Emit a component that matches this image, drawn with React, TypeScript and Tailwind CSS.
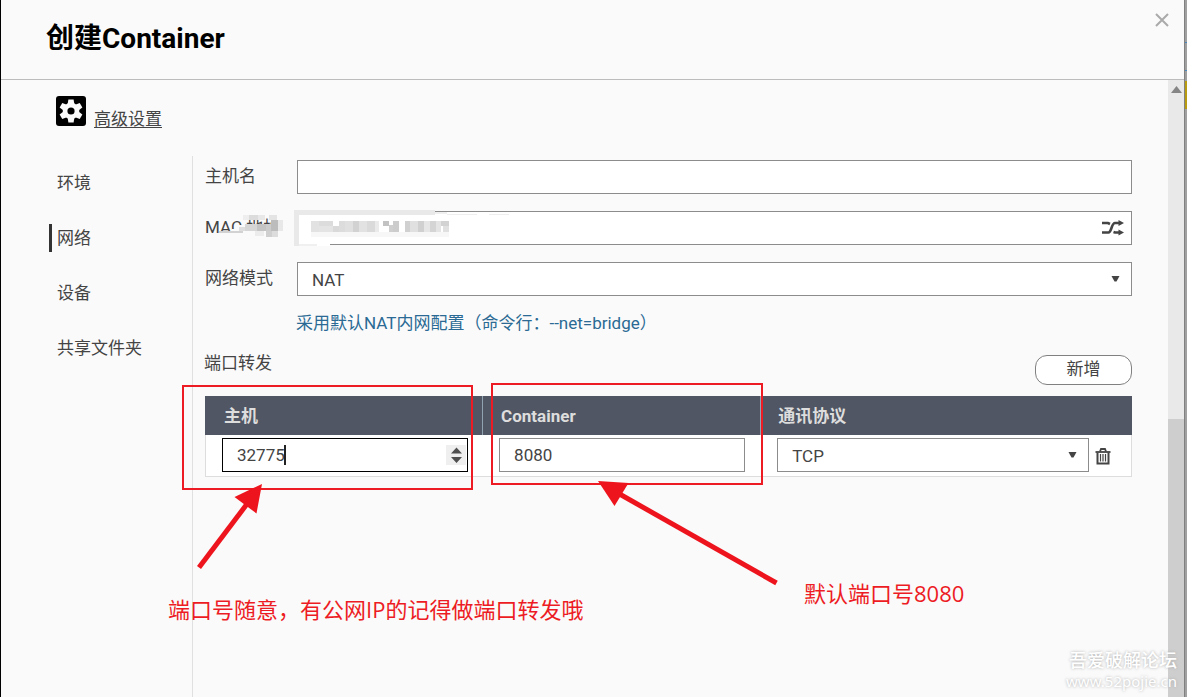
import { useState } from "react";

const navItems = ["环境", "网络", "设备", "共享文件夹"];

// Pixelated cells that hide the MAC address: x, y, width, height, colour
const macCells: [number, number, number, number, string][] = [
  [14, 10, 8, 11, "#e2e2e2"],
  [22, 10, 14, 5, "#dcdcdc"],
  [22, 15, 14, 6, "#e4e4e4"],
  [36, 15, 10, 6, "#d9d9d9"],
  [42, 10, 6, 11, "#dcdcdc"],
  [48, 10, 12, 11, "#e0e0e0"],
  [56, 10, 6, 11, "#d2d2d2"],
  [62, 10, 8, 11, "#e2e2e2"],
  [70, 10, 8, 11, "#dadada"],
  [78, 10, 4, 11, "#eaeaea"],
  [86, 10, 6, 5, "#c2c2c2"],
  [92, 14, 10, 7, "#cfcfcf"],
  [96, 10, 6, 11, "#cccccc"],
  [108, 10, 5, 11, "#d0d0d0"],
  [113, 10, 8, 11, "#e0e0e0"],
  [121, 10, 6, 11, "#d0d0d0"],
  [127, 10, 6, 11, "#e6e6e6"],
  [133, 10, 6, 11, "#d4d4d4"],
  [139, 10, 5, 11, "#e4e4e4"],
  [144, 10, 8, 5, "#d2d2d2"],
  [146, 15, 6, 6, "#e0e0e0"],
  [14, 21, 138, 5, "#f7f7f7"],
];

const labelCells: [number, number, number, number, string][] = [
  [27, 14, 14, 13, "#fafafa"],
  [14, 16, 26, 2, "#d2d2d2"],
  [38, 0, 10, 5, "#eeeeee"],
  [44, 0, 9, 5, "#dcdcdc"],
  [53, 0, 7, 5, "#e8e8e8"],
  [64, 0, 8, 5, "#e4e4e4"],
  [38, 9, 38, 18, "#fafafa"],
  [34, 12, 8, 4, "#dedede"],
  [40, 9, 12, 7, "#d6d6d6"],
  [52, 9, 9, 7, "#c4c4c4"],
  [61, 9, 5, 7, "#cccccc"],
  [66, 5, 7, 11, "#bcbcbc"],
  [73, 5, 5, 11, "#e8e8e8"],
  [50, 16, 9, 5, "#ececec"],
  [61, 16, 6, 6, "#cfcfcf"],
  [67, 16, 6, 6, "#dcdcdc"],
];

function Cells({ cells }: { cells: [number, number, number, number, string][] }) {
  return (
    <>
      {cells.map(([x, y, w, h, fill], i) => (
        <rect key={i} x={x} y={y} width={w} height={h} fill={fill} />
      ))}
    </>
  );
}

function Caret() {
  return (
    <svg
      className="pointer-events-none absolute top-3.5 right-3 h-[6px] w-[9px] fill-[#444]"
      viewBox="0 0 9 6"
      aria-hidden="true"
    >
      <path d="M0.500 0H8.500L5.500 5.500H3.500Z" />
    </svg>
  );
}

const field =
  "block h-[34px] w-full appearance-none rounded-none border border-[#8c8c8c] bg-white px-3.5 text-[17px] text-[#444] outline-none";
const selectField =
  "block h-[34px] w-full appearance-none rounded-none border border-[#8c8c8c] bg-white px-3.5 pt-0.5 text-[17px] text-[#444] outline-none";

function Annotations() {
  return (
    <div className="pointer-events-none absolute top-0 left-0 h-full w-full font-['Open_Sans','Noto_Sans_CJK_SC',sans-serif] text-[22px] leading-8 text-[#ed1c24]">
      <div className="absolute top-[385px] left-[182px] h-[105px] w-[291px] border-2 border-[#ed1c24]" />
      <div className="absolute top-[383px] left-[491px] h-[102px] w-[272px] border-2 border-[#ed1c24]" />
      <svg className="absolute top-0 left-0 h-[640px] w-[800px]" viewBox="0 0 800 640" aria-hidden="true">
        <path d="M199 567.500L250 500" stroke="#ed141d" strokeWidth="5" />
        <path d="M262 484L234.500 497L256.500 513.500Z" fill="#ed141d" />
        <path d="M776.500 583L616 492" stroke="#ed141d" strokeWidth="5" />
        <path d="M598 481L628.500 483L614.500 506Z" fill="#ed141d" />
      </svg>
      <p className="absolute top-[593px] left-[168px] whitespace-nowrap">
        端口号随意，有公网IP的记得做端口转发哦
      </p>
      <p className="absolute top-[577px] left-[804px] whitespace-nowrap">默认端口号8080</p>
    </div>
  );
}

export default function App() {
  const [hostPort, setHostPort] = useState("32775");
  const [active, setActive] = useState("网络");

  return (
    <div className="relative flex min-h-screen overflow-hidden bg-[#a0a0a0] font-[Roboto,'Noto_Sans_CJK_SC',sans-serif] text-[17px] leading-6 text-[#444]">
      <div className="flex min-w-0 flex-1 flex-col border-l border-black bg-[#fafafa]">
        <header className="flex h-20 items-start justify-between border-b border-[#bcbcbc] pr-[14px] pl-[45px]">
          <h1 className="pt-[23px] text-[28px] leading-8 font-bold text-black">创建Container</h1>
          <button type="button" aria-label="关闭" className="mt-3 p-px">
            <svg className="size-[14px]" viewBox="0 0 14 14" fill="none" stroke="#aaa" strokeWidth="2" aria-hidden="true">
              <path d="M1 1L13 13M13 1L1 13" />
            </svg>
          </button>
        </header>

        <div className="flex flex-1">
          <div className="flex min-w-0 flex-1 flex-col pt-4">
            <div className="flex items-start gap-2 pl-[55px]">
              <svg className="size-[30px]" viewBox="0 0 30 30" aria-hidden="true">
                <rect width="30" height="30" rx="3" fill="#000" />
                <g transform="translate(15 15)" fill="#fafafa">
                  <circle r="8.300" />
                  <path d="M-2.600 -11.600H2.600L3.500 -6H-3.500Z" />
                  <path d="M-2.600 -11.600H2.600L3.500 -6H-3.500Z" transform="rotate(60)" />
                  <path d="M-2.600 -11.600H2.600L3.500 -6H-3.500Z" transform="rotate(120)" />
                  <path d="M-2.600 -11.600H2.600L3.500 -6H-3.500Z" transform="rotate(180)" />
                  <path d="M-2.600 -11.600H2.600L3.500 -6H-3.500Z" transform="rotate(240)" />
                  <path d="M-2.600 -11.600H2.600L3.500 -6H-3.500Z" transform="rotate(300)" />
                  <circle r="3.600" fill="#000" />
                </g>
              </svg>
              <a href="#advanced" className="mt-[11px] underline underline-offset-2">
                高级设置
              </a>
            </div>

            <div className="mt-[25px] flex flex-1">
              <nav className="flex w-[191px] shrink-0 flex-col items-start gap-[27px] pt-[13px] pl-12">
                {navItems.map((item) => (
                  <button
                    key={item}
                    type="button"
                    onClick={() => setActive(item)}
                    className={
                      item === active
                        ? "h-7 border-l-[3px] border-[#333] pl-[5px]"
                        : "h-7 border-l-[3px] border-transparent pl-[5px]"
                    }
                  >
                    {item}
                  </button>
                ))}
              </nav>

              <main className="min-w-0 flex-1 border-l border-[#e0e0e0] pt-1 pr-9 pl-3">
                <div className="grid grid-cols-[92px_1fr] gap-y-[17px]">
                  <label htmlFor="hostname" className="mt-1">
                    主机名
                  </label>
                  <input id="hostname" className={field} />

                  <div className="relative mt-1">
                    <label htmlFor="mac">MAC 地址</label>
                    <svg className="absolute top-0 left-0 h-7 w-20" viewBox="0 0 80 28" shapeRendering="crispEdges" aria-hidden="true">
                      <Cells cells={labelCells} />
                    </svg>
                  </div>
                  <div className="relative">
                    <input id="mac" className={field} />
                    <svg className="pointer-events-none absolute -top-px -left-[3px] h-9 w-[224px]" viewBox="-3 -1 224 36" shapeRendering="crispEdges" aria-hidden="true">
                      <rect x="-3" y="-1" width="141" height="5" fill="#e9e9e9" />
                      <rect x="-3" y="-1" width="5" height="36" fill="#e9e9e9" />
                      <rect x="2" y="31" width="31" height="4" fill="#fff" />
                      <rect x="2" y="33" width="18" height="2" fill="#f0f0f0" />
                      <rect x="138" y="1" width="12" height="2" fill="#f0f0f0" />
                      <rect x="150" y="3" width="30" height="1" fill="#eee" />
                      <rect x="192" y="3" width="20" height="1" fill="#eee" />
                      <Cells cells={macCells} />
                    </svg>
                    <button type="button" aria-label="随机生成" className="absolute top-[9px] right-2">
                      <svg className="h-4 w-[22px]" viewBox="0 0 22 16" fill="none" stroke="#444" strokeWidth="2.600" aria-hidden="true">
                        <path d="M0 12.500H6.500C9.500 12.500 9.500 3 13 3H18" />
                        <path d="M0 3H6L8 4M11.500 12L13 12.500H18" />
                        <path d="M16.500 0L22 3L16.500 6ZM16.500 9.500L22 12.500L16.500 15.500Z" fill="#444" stroke="none" />
                      </svg>
                    </button>
                  </div>

                  <label htmlFor="mode" className="mt-1">
                    网络模式
                  </label>
                  <div className="relative">
                    <select id="mode" className={selectField}>
                      <option>NAT</option>
                    </select>
                    <Caret />
                  </div>
                </div>

                <p className="mt-[15px] ml-[91px] text-[#2a6a94]">采用默认NAT内网配置（命令行：--net=bridge）</p>

                <div className="mt-5 flex items-start justify-between">
                  <h2 className="-ml-px leading-4">端口转发</h2>
                  <button type="button" className="h-[30px] w-[97px] rounded-xl border border-[#808080] bg-white pb-0.5">
                    新增
                  </button>
                </div>

                <table className="mt-[11px] w-full table-fixed border-separate border-spacing-0 border-b border-[#ddd] bg-white">
                  <colgroup>
                    <col className="w-[30%]" />
                    <col className="w-[30%]" />
                    <col className="w-[40%]" />
                  </colgroup>
                  <thead>
                    <tr className="h-[39px] bg-[#505663] text-left text-[#ddd]">
                      <th className="border-r border-[#8fa3b0] p-0 pl-[19px] font-bold">主机</th>
                      <th className="border-r border-[#8fa3b0] p-0 pl-[18px] font-bold">Container</th>
                      <th className="p-0 pl-[17px] font-bold">通讯协议</th>
                    </tr>
                  </thead>
                  <tbody>
                    <tr className="align-top">
                      <td className="border-l border-[#ddd] pt-[3px] pr-[15px] pb-1 pl-4">
                        <div className="relative">
                          <input
                            aria-label="主机"
                            value={hostPort}
                            onChange={(e) => setHostPort(e.target.value)}
                            className="block h-[34px] w-full border border-black bg-white px-3.5 text-[17px] text-[#444] caret-transparent outline-none"
                          />
                          <span className="absolute top-[7px] left-[62px] h-5 w-0.5 bg-[#222]" />
                          <svg className="absolute top-[7px] right-0.5 h-5 w-5" viewBox="0 0 20 20" aria-hidden="true">
                            <rect width="20" height="20" fill="#efefef" />
                            <path d="M5 8.500L10.500 2.500L16 8.500ZM5 12L10.500 18L16 12Z" fill="#505050" />
                          </svg>
                        </div>
                      </td>
                      <td className="pt-[3px] pr-4 pb-1 pl-4">
                        <input aria-label="Container" defaultValue="8080" className={field} />
                      </td>
                      <td className="border-r border-[#ddd] pt-[3px] pr-5 pb-1 pl-4">
                        <div className="flex items-center gap-1.5">
                          <div className="relative flex-1">
                            <select aria-label="通讯协议" className={selectField}>
                              <option>TCP</option>
                            </select>
                            <Caret />
                          </div>
                          <button type="button" aria-label="删除" className="pt-0.5">
                            <svg className="h-[17px] w-4" viewBox="0 0 16 17" fill="none" stroke="#444" aria-hidden="true">
                              <path d="M0.500 4H15.500" strokeWidth="1.800" />
                              <path d="M5 3.500L6 1H10L11 3.500" strokeWidth="1.800" />
                              <path d="M2.500 4.500V15.500H13.500V4.500" strokeWidth="2" />
                              <path d="M5.500 6V13.500M8 6V13.500M10.500 6V13.500" strokeWidth="1.200" />
                            </svg>
                          </button>
                        </div>
                      </td>
                    </tr>
                  </tbody>
                </table>
              </main>
            </div>
          </div>

          <div className="flex w-4 flex-col bg-[#e9e9e9]" aria-hidden="true">
            <div className="flex h-[339px] justify-center pt-1.5">
              <svg className="h-[7px] w-[11px]" viewBox="0 0 11 7" fill="#858585">
                <path d="M5.500 0L11 7H0Z" />
              </svg>
            </div>
            <div className="flex-1 bg-[#cecece]" />
          </div>
        </div>
      </div>

      <div className="flex w-[3px] flex-col border-l border-[#808080]" aria-hidden="true">
        <div className="mt-[42px] h-px bg-[#4a86b8]" />
        <div className="mt-[27px] h-px bg-[#4a86b8]" />
        <div className="mt-2.5 h-7 bg-[#b89b10]" />
      </div>

      <Annotations />

      <div className="pointer-events-none absolute right-2.5 bottom-2 flex flex-col items-end gap-1 font-['Noto_Sans','Noto_Sans_CJK_SC',sans-serif] text-white [text-shadow:0_0_3px_#aaa]">
        <p className="text-lg leading-[18px] font-medium">吾爱破解论坛</p>
        <p className="text-[15px] leading-4">www.52pojie.cn</p>
      </div>
    </div>
  );
}
